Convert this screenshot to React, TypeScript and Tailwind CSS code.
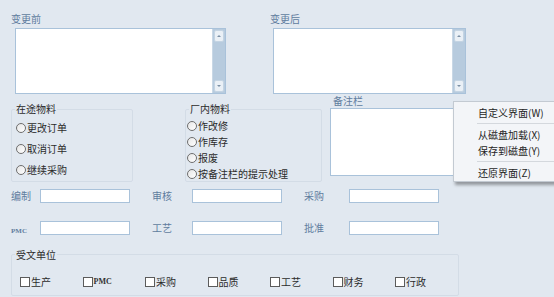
import React from "react";

const cjk = "font-['Noto_Sans_CJK_SC','Noto_Sans',sans-serif]";

function ScrollBox({ className }: { className: string }) {
  return (
    <div className={`flex border border-[#a9c2da] bg-white ${className}`}>
      <div className="flex-1" />
      <div className="w-[13px] bg-[#b7cbde] border-l border-[#c9d8e6] flex flex-col justify-between py-[1px]">
        <div className="mx-[1px] h-[12px] rounded-[2px] border border-[#c4d4e3] bg-[#eaf0f6] flex items-center justify-center">
          <span className="block w-0 h-0 border-x-[2px] border-x-transparent border-b-[2px] border-b-[#7b8fa5]" />
        </div>
        <div className="mx-[1px] h-[12px] rounded-[2px] border border-[#c4d4e3] bg-[#eaf0f6] flex items-center justify-center">
          <span className="block w-0 h-0 border-x-[2px] border-x-transparent border-t-[2px] border-t-[#7b8fa5]" />
        </div>
      </div>
    </div>
  );
}

function Radio({ label }: { label: string }) {
  return (
    <div className="flex items-center h-[14px]">
      <span className="w-[10px] h-[10px] rounded-full border border-[#6e6e6e] bg-gradient-to-br from-[#e6e6e6] to-white mr-[1px]" />
      <span className="text-[10px] leading-none text-[#2b2b2b]">{label}</span>
    </div>
  );
}

function Check({ label }: { label: string }) {
  return (
    <div className="flex items-center w-[62.5px]">
      <span className="w-[10px] h-[10px] border border-[#5b5b5b] bg-white mr-[1px]" />
      {label === "PMC" ? (
        <span className="font-['Liberation_Serif',serif] text-[8px] font-bold text-[#333]">PMC</span>
      ) : (
        <span className="text-[10px] leading-none text-[#2b2b2b]">{label}</span>
      )}
    </div>
  );
}

function Field({ label, w, serif }: { label: string; w: string; serif?: boolean }) {
  return (
    <div className="flex items-center">
      <span className={`${w} shrink-0 text-[#5f7c9e] ${serif ? "font-['Liberation_Serif',serif] text-[7px] font-bold mt-[7px]" : "text-[10px]"}`}>
        {label}
      </span>
      <div className="w-[90px] h-[14px] shrink-0 border border-[#a9c2da] bg-white" />
    </div>
  );
}

const menuItems: (string | null)[] = ["自定义界面(W)", null, "从磁盘加载(X)", "保存到磁盘(Y)", null, "还原界面(Z)"];

export default function App() {
  return (
    <div className={`relative w-[554px] h-[297px] overflow-hidden bg-[#e1e8f0] ${cjk}`}>
      {/* before / after */}
      <div className="flex pt-[11px]">
        <div className="ml-[11px] w-[259px]">
          <div className="h-[15px] text-[10px] leading-[15px] text-[#5f7c9e]">变更前</div>
          <ScrollBox className="mt-[2px] ml-[4px] w-[211px] h-[66px]" />
        </div>
        <div>
          <div className="h-[15px] text-[10px] leading-[15px] text-[#5f7c9e]">变更后</div>
          <ScrollBox className="mt-[2px] ml-[3px] w-[193px] h-[66px]" />
        </div>
      </div>

      {/* middle */}
      <div className="flex mt-[3px]">
        <fieldset className="ml-[11px] mt-[6px] w-[122px] h-[79px] border border-[#d3dce6] rounded-[2px]">
          <legend className="ml-[3px] px-[1px] text-[10px] leading-[12px] text-[#2b2b2b]">在途物料</legend>
          <div className="flex flex-col gap-[7px] ml-[4px] mt-[6px]">
            <Radio label="更改订单" />
            <Radio label="取消订单" />
            <Radio label="继续采购" />
          </div>
        </fieldset>
        <fieldset className="ml-[52px] mt-[6px] w-[137px] h-[79px] border border-[#d3dce6] rounded-[2px]">
          <legend className="ml-[3px] px-[1px] text-[10px] leading-[12px] text-[#2b2b2b]">厂内物料</legend>
          <div className="flex flex-col gap-[2px] ml-[1px] mt-[4px]">
            <Radio label="作改修" />
            <Radio label="作库存" />
            <Radio label="报废" />
            <Radio label="按备注栏的提示处理" />
          </div>
        </fieldset>
        <div className="ml-[8px]">
          <div className="ml-[3px] h-[8px] text-[10px] leading-[8px] text-[#5f7c9e]">备注栏</div>
          <div className="mt-[3px] w-[132px] h-[68px] border border-[#a9c2da] bg-white" />
        </div>
      </div>

      {/* sign fields */}
      <div className="grid grid-cols-[141px_152px_140px] gap-y-[16px] ml-[11px] mt-[6px]">
        <Field label="编制" w="w-[29px]" />
        <Field label="审核" w="w-[40px]" />
        <Field label="采购" w="w-[45px]" />
        <Field label="PMC" w="w-[29px]" serif />
        <Field label="工艺" w="w-[40px]" />
        <Field label="批准" w="w-[45px]" />
      </div>

      {/* recipients */}
      <fieldset className="ml-[11px] mt-[12px] w-[443px] h-[47px] border border-[#d3dce6] rounded-[2px]">
        <legend className="ml-[3px] px-[1px] text-[10px] leading-[12px] text-[#2b2b2b]">受文单位</legend>
        <div className="flex ml-[8px] mt-[15px]">
          {["生产", "PMC", "采购", "品质", "工艺", "财务", "行政"].map((l) => (
            <Check key={l} label={l} />
          ))}
        </div>
      </fieldset>

      {/* context menu */}
      <div className="absolute left-[453px] top-[101px] w-[104px] h-[81px] pt-[2px] bg-[#f3f5f8] border border-[#c3cad2] shadow-[2px_3px_3px_rgba(0,0,0,0.35)]">
        {menuItems.map((m, i) =>
          m ? (
            <div key={i} className="h-[16px] pl-[24px] flex items-center text-[10px] text-[#1e1e1e] whitespace-nowrap">
              {m}
            </div>
          ) : (
            <div key={i} className="h-[6px] flex items-center pl-[23px]">
              <div className="flex-1 h-px bg-[#d4d8dd]" />
            </div>
          )
        )}
      </div>
    </div>
  );
}
